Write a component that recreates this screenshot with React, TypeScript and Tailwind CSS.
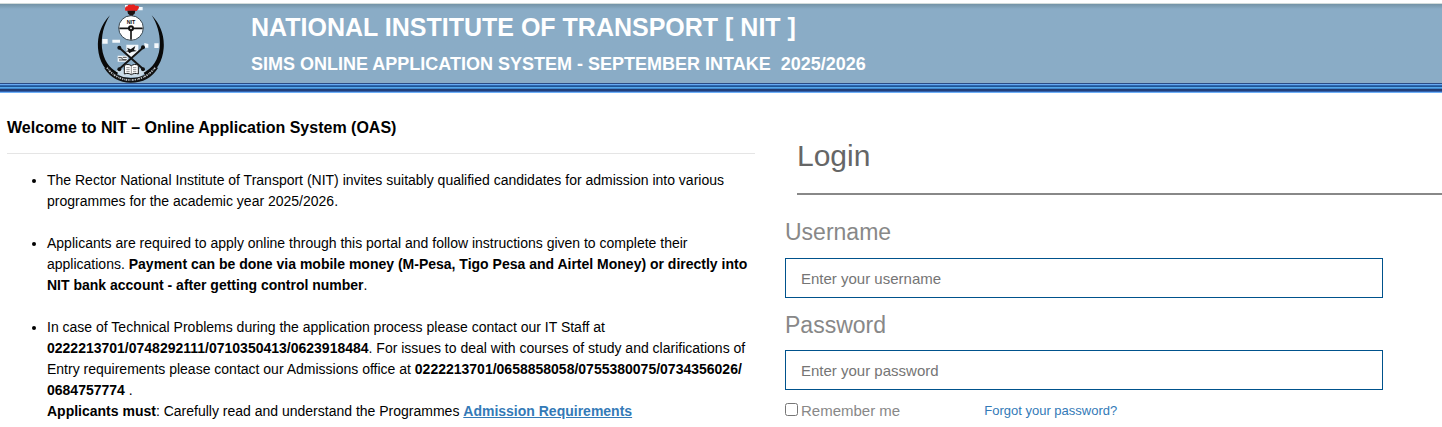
import { useState } from "react";

// Border rows under the banner, from top to bottom
const STRIPES = [
  "bg-[#2b4c86]",
  "bg-[#68aaf2]",
  "bg-[#2c68b0]",
  "bg-[#1f5596]",
  "bg-[#55a8ea]",
  "bg-[#3f86cc]",
  "bg-[#223c70]",
  "bg-[#24407a]",
  "bg-[#3262ae]",
  "bg-[#6fb0f8]",
];

const Logo = () => (
  <svg
    viewBox="22 14 201 237"
    className="h-[79px] w-[67px]"
    role="img"
    aria-label="NIT logo"
  >
    {/* pale patches */}
    <g fill="#f4f8fb">
      <path d="M38 119h16v14H38zM68 121h23v9H68zM194 132h13v14h-13zM164 131l12 3v11h-12zM84 169h30v18H84zM106 17h10v12h-10zM146 23h13v10h-13z" />
      <path d="M110 136h36v24l-18 18h-8l-10-18z" />
      <path d="M76 216l20-8 28 14 28-14 20 8-22 18h-52z" opacity="0.6" />
    </g>
    {/* side horns */}
    <path
      d="M61 48C34 76 22 110 25 147c3 40 22 70 52 87l8-14C58 207 41 180 37 146 34 110 42 78 61 48z"
      fill="#090909"
    />
    <path
      d="M186 48c27 28 39 62 36 99-3 40-22 70-52 87l-8-14c27-13 44-40 48-74 3-36-5-68-24-98z"
      fill="#090909"
    />
    <path
      d="M50 203c17 26 42 40 73 40s59-13 76-41"
      fill="none"
      stroke="#111"
      strokeWidth="14"
    />
    <path
      d="M52 205c17 24 42 37 71 37s56-14 74-38"
      fill="none"
      stroke="#c3c9cd"
      strokeWidth="5"
      strokeDasharray="4 3 2 2 5 3"
    />
    {/* torch */}
    <path
      d="M107 34c-3-9 1-14 7-13-1-4 5-7 10-4 6-3 13-1 14 3 8-2 12 2 9 7l-6 8z"
      fill="#e5211d"
    />
    <path d="M113 34h24l-2 9-5 4v8h-10v-8l-5-4z" fill="#1b1010" />
    <path d="M112 50h23l6 9h-34z" fill="#111" />
    {/* steering wheel */}
    <circle cx="124" cy="86" r="37" fill="#fff" stroke="#35454f" strokeWidth="3" />
    <path
      d="M89 87h70M124 87v34"
      stroke="#151515"
      strokeWidth="5"
      fill="none"
    />
    <circle cx="124" cy="87" r="9" fill="#111" />
    <circle cx="124" cy="87" r="3" fill="#ddd" />
    <text
      x="124"
      y="75"
      textAnchor="middle"
      fill="#111"
      className="font-['Liberation_Sans',Arial,sans-serif] text-[16px] font-bold"
    >
      NIT
    </text>
    {/* crossed rods */}
    <path
      d="M89 145l72 65M160 145l-72 65"
      stroke="#141414"
      strokeWidth="6"
      fill="none"
    />
    <g fill="#111">
      <circle cx="89" cy="145" r="6" />
      <circle cx="160" cy="144" r="6" />
      <circle cx="89" cy="210" r="6" />
      <circle cx="160" cy="210" r="6" />
      <path d="M112 145l11 5 14-10-4 12 9 3-15 2-8 5-3-5-8-1 8-3z" />
    </g>
    {/* cart */}
    <path
      d="M86 175h10l3 6h12M88 182h22M99 174h12"
      stroke="#4b4b4b"
      strokeWidth="3"
      fill="none"
    />
    {/* open book */}
    <path
      d="M104 198c8-4 15-3 21 1 6-4 13-5 21-1v26c-8-3-15-2-21 2-6-4-13-5-21-2z"
      fill="#fff"
      stroke="#181818"
      strokeWidth="3"
    />
    <path
      d="M125 199v27M110 205h10M110 211h10M110 217h10M130 205h10M130 211h10M130 217h10"
      stroke="#5a5a5a"
      strokeWidth="2"
      fill="none"
    />
  </svg>
);

const Header = () => (
  <header className="pt-[3px]">
    <div className="border-t border-[#d3dcdb] bg-[#8aacc6] bg-linear-to-b from-[#7393a6] to-[#8aacc6] to-[5px]">
      <div className="flex h-[79px] items-start">
        <div className="w-[251px] shrink-0 pl-[97px]">
          <Logo />
        </div>
        <div className="font-bold whitespace-nowrap text-white">
          <h1 className="pt-2 text-[25px] leading-[30px]">
            NATIONAL INSTITUTE OF TRANSPORT [ NIT ]
          </h1>
          <h2 className="pt-3 text-[18px] leading-5">
            SIMS ONLINE APPLICATION SYSTEM - SEPTEMBER INTAKE&nbsp; 2025/2026
          </h2>
        </div>
      </div>
    </div>
    {STRIPES.map((color, index) => (
      <div key={index} className={`h-px ${color}`} />
    ))}
  </header>
);

const Instructions = () => (
  <section className="pt-6">
    <h3 className="text-base leading-[21px] font-bold">
      Welcome to NIT – Online Application System (OAS)
    </h3>
    <hr className="mt-[15px] border-[#e5e5e5]" />
    <ul className="mt-4 list-disc space-y-[21px] pl-10 text-sm leading-[21px]">
      <li>
        The Rector National Institute of Transport (NIT) invites suitably
        qualified candidates for admission into various programmes for the
        academic year 2025/2026.
      </li>
      <li>
        Applicants are required to apply online through this portal and follow
        instructions given to complete their applications.{" "}
        <b>
          Payment can be done via mobile money (M-Pesa, Tigo Pesa and Airtel
          Money) or directly into NIT bank account - after getting control
          number
        </b>
        .
      </li>
      <li>
        In case of Technical Problems during the application process please
        contact our IT Staff at{" "}
        <b>0222213701/0748292111/0710350413/0623918484</b>. For issues to deal
        with courses of study and clarifications of Entry requirements please
        contact our Admissions office at{" "}
        <b>
          0222213701/0658858058/0755380075/0734356026/
          <wbr />
          0684757774
        </b>{" "}
        .
        <br />
        <b>Applicants must</b>: Carefully read and understand the Programmes{" "}
        <a href="#requirements" className="font-bold text-[#337ab7] underline">
          Admission Requirements
        </a>
      </li>
    </ul>
  </section>
);

const LoginForm = () => {
  const [remember, setRemember] = useState<boolean>(false);

  return (
    <form className="pt-[45px]" onSubmit={(e) => e.preventDefault()}>
      <h2 className="ml-3 border-b-2 border-[#888] pb-[19px] text-[30px] leading-[36px] text-[#666]">
        Login
      </h2>
      <div className="w-[91%] pt-6">
        <label
          htmlFor="username"
          className="block text-[23px] leading-[26px] text-[#888]"
        >
          Username
        </label>
        <input
          id="username"
          type="text"
          placeholder="Enter your username"
          className="mt-[13px] block h-10 w-full border border-[#00528c] px-[15px] text-[15px] placeholder:text-[#757575]"
        />
        <label
          htmlFor="password"
          className="mt-[14px] block text-[23px] leading-[26px] text-[#888]"
        >
          Password
        </label>
        <input
          id="password"
          type="password"
          placeholder="Enter your password"
          className="mt-3 block h-10 w-full border border-[#00528c] px-[15px] text-[15px] placeholder:text-[#757575]"
        />
        <div className="mt-[11px] flex items-center">
          <div className="flex w-1/3 items-center gap-[3px]">
            <input
              id="remember"
              type="checkbox"
              checked={remember}
              onChange={(e) => setRemember(e.target.checked)}
              className="mb-[3px] h-[13px] w-[13px]"
            />
            <label
              htmlFor="remember"
              className="text-[15px] leading-5 text-[#888]"
            >
              Remember me
            </label>
          </div>
          <a href="#forgot" className="text-[13px] leading-5 text-[#337ab7]">
            Forgot your password?
          </a>
        </div>
      </div>
    </form>
  );
};

export default function App() {
  return (
    <div className="bg-white font-['Liberation_Sans',Arial,sans-serif] text-black">
      <Header />
      <main className="grid grid-cols-[748fr_657fr] gap-[30px] pl-[7px]">
        <Instructions />
        <LoginForm />
      </main>
    </div>
  );
}
